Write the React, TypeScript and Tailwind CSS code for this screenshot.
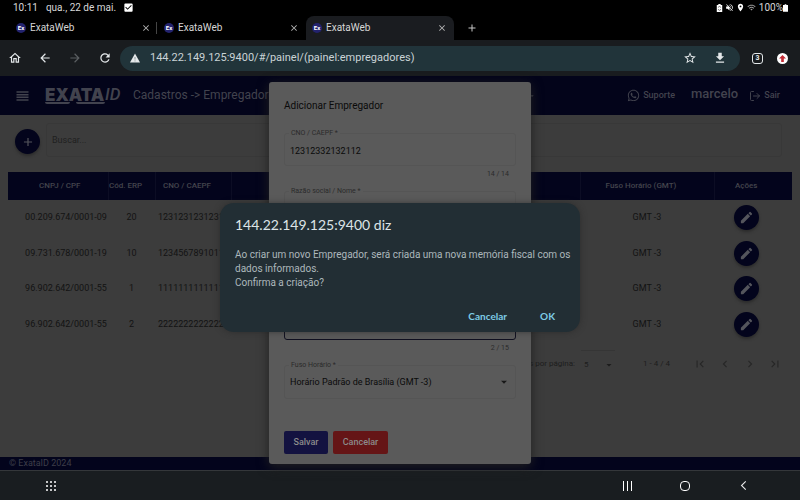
import React from "react";
import {
  MdOutlineHome, MdArrowBack, MdArrowForward, MdRefresh, MdStarBorder, MdDownload,
  MdClose, MdAdd, MdEdit, MdFirstPage, MdLastPage, MdChevronLeft, MdChevronRight,
  MdArrowDropDown, MdVolumeOff, MdLocationOn, MdWifi, MdCheckBox, MdArrowBackIosNew,
} from "react-icons/md";
import { FaWhatsapp } from "react-icons/fa";
import { LogOut } from "lucide-react";

const rows = [
  { cnpj: "00.209.674/0001-09", erp: "20", cno: "12312312312312" },
  { cnpj: "09.731.678/0001-19", erp: "10", cno: "12345678910111" },
  { cnpj: "96.902.642/0001-55", erp: "1", cno: "11111111111111" },
  { cnpj: "96.902.642/0001-55", erp: "2", cno: "22222222222222" },
];

function BatteryRecycleIcon() {
  return (
    <svg viewBox="0 0 9 10" className="h-2 w-[7px]" aria-hidden="true">
      <path d="M3 0h3v1h2v9h-7V1h2z" fill="currentColor" />
      <path d="M3 4.500a1.500 1.500 0 0 1 3 0M6 6.500a1.500 1.500 0 0 1-3 0" stroke="#333" strokeWidth="0.800" fill="none" />
    </svg>
  );
}

function StatusBar() {
  return (
    <div className="flex h-[15px] items-center pl-[13px] pr-[12px] text-[10px] text-[#d8d8d8]">
      <span>10:11</span>
      <span className="ml-2">qua., 22 de mai.</span>
      <MdCheckBox className="ml-[7px] size-[11px] text-white" />
      <div className="ml-auto flex items-center">
        <div className="flex items-center gap-[2px] text-white">
          <BatteryRecycleIcon />
          <MdVolumeOff className="size-[9px]" />
          <MdLocationOn className="size-[9px]" />
          <MdWifi className="size-[9px] text-[#999999]" />
        </div>
        <span className="ml-[3px]">100%</span>
        <svg viewBox="0 0 6 9" className="h-2 w-[5px]" aria-hidden="true">
          <path d="M2 0h2v1h2v8H0V1h2z" fill="#fff" />
        </svg>
      </div>
    </div>
  );
}

function Tab({ active = false, divider = false }: { active?: boolean; divider?: boolean }) {
  return (
    <div
      className={
        "flex h-full w-[148px] items-center rounded-t-lg pb-px pl-[6px] pr-px " +
        (active ? "bg-[#1a1c20]" : "bg-black")
      }
    >
      <span className="flex size-[10px] items-center justify-center rounded-full bg-[#23236e] text-[6px] font-bold text-white">
        Ex
      </span>
      <span className="ml-1 text-[10px] text-[#d6d6d6]">ExataWeb</span>
      <button aria-label="Fechar guia" className="ml-auto text-[#b8b8b8]">
        <MdClose className="size-[10px]" />
      </button>
      <span className={"ml-[5px] h-3 w-px " + (divider ? "bg-[#454545]" : "")} />
    </div>
  );
}

function Toolbar() {
  return (
    <div className="flex h-9 shrink-0 items-center bg-[#191c1f] text-[#e4e8ea]">
      <div className="flex pl-2 text-[14px]">
        <button aria-label="Início" className="w-[30px]"><MdOutlineHome /></button>
        <button aria-label="Voltar" className="w-[30px]"><MdArrowBack /></button>
        <button aria-label="Avançar" className="w-[30px] text-[#5b5f62]"><MdArrowForward /></button>
        <button aria-label="Atualizar" className="w-[22px]"><MdRefresh /></button>
      </div>
      <div className="flex h-[25px] flex-1 items-center rounded-full bg-[#21343a] pl-[9px] pr-[13px]">
        <svg viewBox="0 0 12 12" className="size-3" aria-hidden="true">
          <path d="M6 1.500 11 10.500H1Z" fill="currentColor" />
          <path d="M6 5v2.600M6 8.400v1" stroke="#8d989b" strokeWidth="1" />
        </svg>
        <input
          aria-label="Endereço"
          defaultValue="144.22.149.125:9400/#/painel/(painel:empregadores)"
          className="ml-[9px] min-w-0 flex-1 bg-transparent text-[11px] text-[#c9d3d6] outline-none"
        />
        <button aria-label="Favoritar"><MdStarBorder className="size-[14px]" /></button>
        <button aria-label="Baixar" className="ml-4"><MdDownload className="size-[14px]" /></button>
      </div>
      <button className="ml-3 flex size-[11px] items-center justify-center rounded-[3px] border border-[#e4e8ea] text-[7px] font-bold">3</button>
      <button aria-label="Atualização" className="ml-[14px] mr-3 flex size-[11px] items-center justify-center rounded-full bg-white text-[#c22b35]">
        <svg viewBox="0 0 8 8" className="size-[7px]" aria-hidden="true">
          <path d="M4 0 8 4H5.500v4h-3V4H0z" fill="currentColor" />
        </svg>
      </button>
    </div>
  );
}

function AppHeader() {
  return (
    <header className="flex h-[39px] shrink-0 items-center bg-[#03041a] pl-4 pr-5 text-[#42434e]">
      <button aria-label="Menu">
        <svg viewBox="0 0 13 10" className="h-[10px] w-[13px]" aria-hidden="true">
          <path d="M0.500 1h12M0.500 3.700h12M0.500 6.300h12M0.500 9h12" stroke="currentColor" strokeWidth="1.500" />
        </svg>
      </button>
      <div className="ml-4 flex w-[79px] items-start leading-none">
        <span className="flex flex-col font-['Inter'] text-[17px] font-black leading-[14px]">
          EXATA
          <span className="flex h-[2px] w-[60px] gap-[6px]">
            <span className="w-[25px] rounded-b-sm bg-[#42434e]" />
            <span className="flex-1 rounded-b-sm bg-[#42434e]" />
          </span>
        </span>
        <span className="text-[17px] font-medium italic leading-[13px]">ID</span>
      </div>
      <h1 className="ml-[9px] whitespace-nowrap pb-px text-[12px]">Cadastros -&gt; Empregadores</h1>
      <MdArrowDropDown className="ml-auto size-2" />
      <a href="#suporte" className="ml-[91px] flex items-center gap-[3px] text-[9px] font-medium">
        <FaWhatsapp className="size-[13px]" />Suporte
      </a>
      <span className="ml-4 pb-[3px] text-[13px] font-medium">marcelo</span>
      <a href="#sair" className="ml-[11px] flex items-center gap-[3px] text-[9px] font-medium">
        <LogOut className="size-[12px]" strokeWidth={2} />Sair
      </a>
    </header>
  );
}

function EmployersTable() {
  return (
    <table className="h-[170px] w-full table-fixed border-collapse text-center text-[9px] text-[#131313]">
      <colgroup>
        <col className="w-[100px]" /><col className="w-[47px]" /><col className="w-[76px]" />
        <col /><col className="w-[134px]" /><col className="w-[78px]" />
      </colgroup>
      <thead>
        <tr className="h-7 bg-[#03041c] text-[8px] text-[#43444d]">
          <th className="border-r border-[#0c0d24] pl-1 font-medium">CNPJ / CPF</th>
          <th className="whitespace-nowrap border-r border-[#0c0d24] pr-3 font-medium">Cód. ERP</th>
          <th className="border-r border-[#0c0d24] pr-3 font-medium">CNO / CAEPF</th>
          <th className="border-r border-[#0c0d24]" />
          <th className="border-r border-[#0c0d24] pr-3 font-medium">Fuso Horário (GMT)</th>
          <th className="pr-[14px] font-medium">Ações</th>
        </tr>
      </thead>
      <tbody>
        {rows.map((r, i) => (
          <tr key={i}>
            <td className="pl-4">{r.cnpj}</td>
            <td>{r.erp}</td>
            <td className="pl-[3px] text-left">{r.cno}</td>
            <td />
            <td>GMT -3</td>
            <td className="pr-[14px]">
              <button aria-label="Editar" className="mx-auto flex size-[25px] items-center justify-center rounded-full bg-[#03041c] text-[#54555c] shadow-[0_2px_3px_#2b2b2b]">
                <MdEdit className="size-[15px]" />
              </button>
            </td>
          </tr>
        ))}
      </tbody>
    </table>
  );
}

function Paginator() {
  return (
    <div className="flex h-11 items-center justify-end pr-[5px] text-[8px] text-[#1c1c1c]">
      <label htmlFor="page-size">Itens por página:</label>
      <div className="ml-[6px] flex w-[34px] items-center border-t border-[#353535] py-2">
        <select id="page-size" className="w-full appearance-none bg-transparent pl-[3px] outline-none">
          <option>5</option>
        </select>
        <MdArrowDropDown className="size-3 shrink-0" />
      </div>
      <span className="ml-7 w-11 whitespace-nowrap">1 - 4 / 4</span>
      <div className="flex text-[#272727]">
        <button aria-label="Primeira" className="flex w-[25px] justify-center"><MdFirstPage className="size-[14px]" /></button>
        <button aria-label="Anterior" className="flex w-[25px] justify-center"><MdChevronLeft className="size-[14px]" /></button>
        <button aria-label="Próxima" className="flex w-[25px] justify-center"><MdChevronRight className="size-[14px]" /></button>
        <button aria-label="Última" className="flex w-[25px] justify-center"><MdLastPage className="size-[14px]" /></button>
      </div>
    </div>
  );
}

function Field(props: { id: string; label?: string; value?: string; hint?: string; focused?: boolean }) {
  return (
    <div className="h-[58px]">
      <div className={"relative flex h-[33px] items-center rounded-[3px] border " + (props.focused ? "border-[#101020]" : "border-[#555555]")}>
        {props.label && (
          <label htmlFor={props.id} className="absolute -top-[6px] left-1 bg-[#5a5a5a] px-[2px] text-[7px] text-[#2a2a2a]">
            {props.label}
          </label>
        )}
        <input
          id={props.id}
          aria-label={props.label ? undefined : props.id}
          defaultValue={props.value}
          className="w-full bg-transparent px-[5px] pt-[5px] text-[9px] text-[#0a0a0a] outline-none"
        />
      </div>
      <p className="pr-[7px] pt-[3px] text-right text-[7px] text-[#2a2a2a]">{props.hint}</p>
    </div>
  );
}

function EmployerDialog() {
  return (
    <form className="w-[262px] rounded-[3px] bg-[#5a5a5a] px-[15px] pb-[10px] pt-4 shadow-[0_3px_12px_#202020]">
      <h2 className="mb-[20px] text-[10px] leading-[15px] text-[#0a0a0a]">Adicionar Empregador</h2>
      <Field id="cno" label="CNO / CAEPF *" value="12312332132112" hint="14 / 14" />
      <Field id="razao" label="Razão social / Nome *" />
      <Field id="cnpj" />
      <Field id="erp" hint="2 / 15" focused />
      <div className="relative flex h-[34px] items-center rounded-[3px] border border-[#555555]">
        <label htmlFor="fuso" className="absolute -top-[6px] left-1 bg-[#5a5a5a] px-[2px] text-[7px] text-[#2a2a2a]">
          Fuso Horário *
        </label>
        <select id="fuso" className="w-full appearance-none bg-transparent px-[5px] pt-px text-[9px] text-[#0a0a0a] outline-none">
          <option>Horário Padrão de Brasília (GMT -3)</option>
        </select>
        <MdArrowDropDown className="mr-1 size-[14px] shrink-0 text-[#181818]" />
      </div>
      <div className="mt-8 flex gap-[5px] text-[9px] font-medium text-[#8b8b8b]">
        <button type="button" className="h-[23px] w-11 rounded-[2px] bg-[#131240]">Salvar</button>
        <button type="button" className="h-[23px] w-[55px] rounded-[2px] bg-[#651516]">Cancelar</button>
      </div>
    </form>
  );
}

function ConfirmDialog() {
  return (
    <div role="alertdialog" aria-labelledby="confirm-title" className="w-[360px] rounded-[14px] bg-[#222e34] px-[15px] pb-2 pt-3 shadow-[0_0_6px_#22222288]">
      <h2 id="confirm-title" className="font-['Lato'] text-[14px] leading-5 text-[#dde4e7]">144.22.149.125:9400 diz</h2>
      <p className="-mr-2 mt-[13px] text-[10px] leading-[14px] text-[#adb8bc]">
        Ao criar um novo Empregador, será criada uma nova memória fiscal com os dados informados.
        <br />
        Confirma a criação?
      </p>
      <div className="mt-[18px] flex justify-end gap-[33px] pr-[10px] font-['Lato'] text-[10px] font-bold leading-4 text-[#7ecbe4]">
        <button>Cancelar</button>
        <button>OK</button>
      </div>
    </div>
  );
}

function AndroidNav() {
  return (
    <nav className="flex h-[30px] shrink-0 items-center border-t border-[#34373a] bg-[#191d20] pl-[46px] pr-[51px] text-[#e8e8e8]">
      <button aria-label="Aplicativos" className="grid grid-cols-3 gap-[2px]">
        {Array.from({ length: 9 }, (_, i) => <span key={i} className="size-[2px] rounded-full bg-white" />)}
      </button>
      <button aria-label="Recentes" className="ml-auto flex gap-[3px]">
        <span className="h-[10px] w-px bg-white" /><span className="h-[10px] w-px bg-white" /><span className="h-[10px] w-px bg-white" />
      </button>
      <button aria-label="Início" className="ml-12 size-[10px] rounded-[4px] border border-white" />
      <button aria-label="Voltar" className="ml-12"><MdArrowBackIosNew className="size-[11px]" /></button>
    </nav>
  );
}

export default function App() {
  return (
    <div className="flex h-screen flex-col overflow-hidden bg-black font-['Roboto',sans-serif]">
      <StatusBar />
      <div className="flex h-[25px] shrink-0 items-center pl-[10px] pt-px">
        <Tab divider />
        <Tab />
        <Tab active />
        <button aria-label="Nova guia" className="ml-3 text-[#c8c8c8]"><MdAdd className="size-3" /></button>
      </div>
      <Toolbar />
      <div className="relative flex min-h-0 flex-1 flex-col bg-[#3c3c3c]">
        <AppHeader />
        <main className="min-h-0 flex-1 overflow-hidden px-2 pt-2">
          <div className="flex h-[49px] items-start gap-[6px] pl-[7px] pr-[10px]">
            <button aria-label="Adicionar" className="mt-[6px] flex size-[25px] shrink-0 items-center justify-center rounded-full bg-[#03041c] text-[#54555c] shadow-[0_2px_3px_#2b2b2b]">
              <MdAdd className="size-[14px]" />
            </button>
            <input
              aria-label="Buscar"
              placeholder="Buscar..."
              className="h-[34px] flex-1 rounded-[3px] border border-[#383838] bg-transparent px-[5px] text-[9px] outline-none placeholder:text-[#202020]"
            />
          </div>
          <EmployersTable />
          <Paginator />
        </main>
        <footer className="h-[13px] shrink-0 bg-[#03041c] pl-[9px] text-[9px] leading-[13px] text-[#3d3e49]">© ExataID 2024</footer>
        <div className="absolute inset-0 flex items-center justify-center">
          <EmployerDialog />
        </div>
        <div className="absolute inset-0 flex items-center justify-center pb-[11px]">
          <ConfirmDialog />
        </div>
      </div>
      <AndroidNav />
    </div>
  );
}
